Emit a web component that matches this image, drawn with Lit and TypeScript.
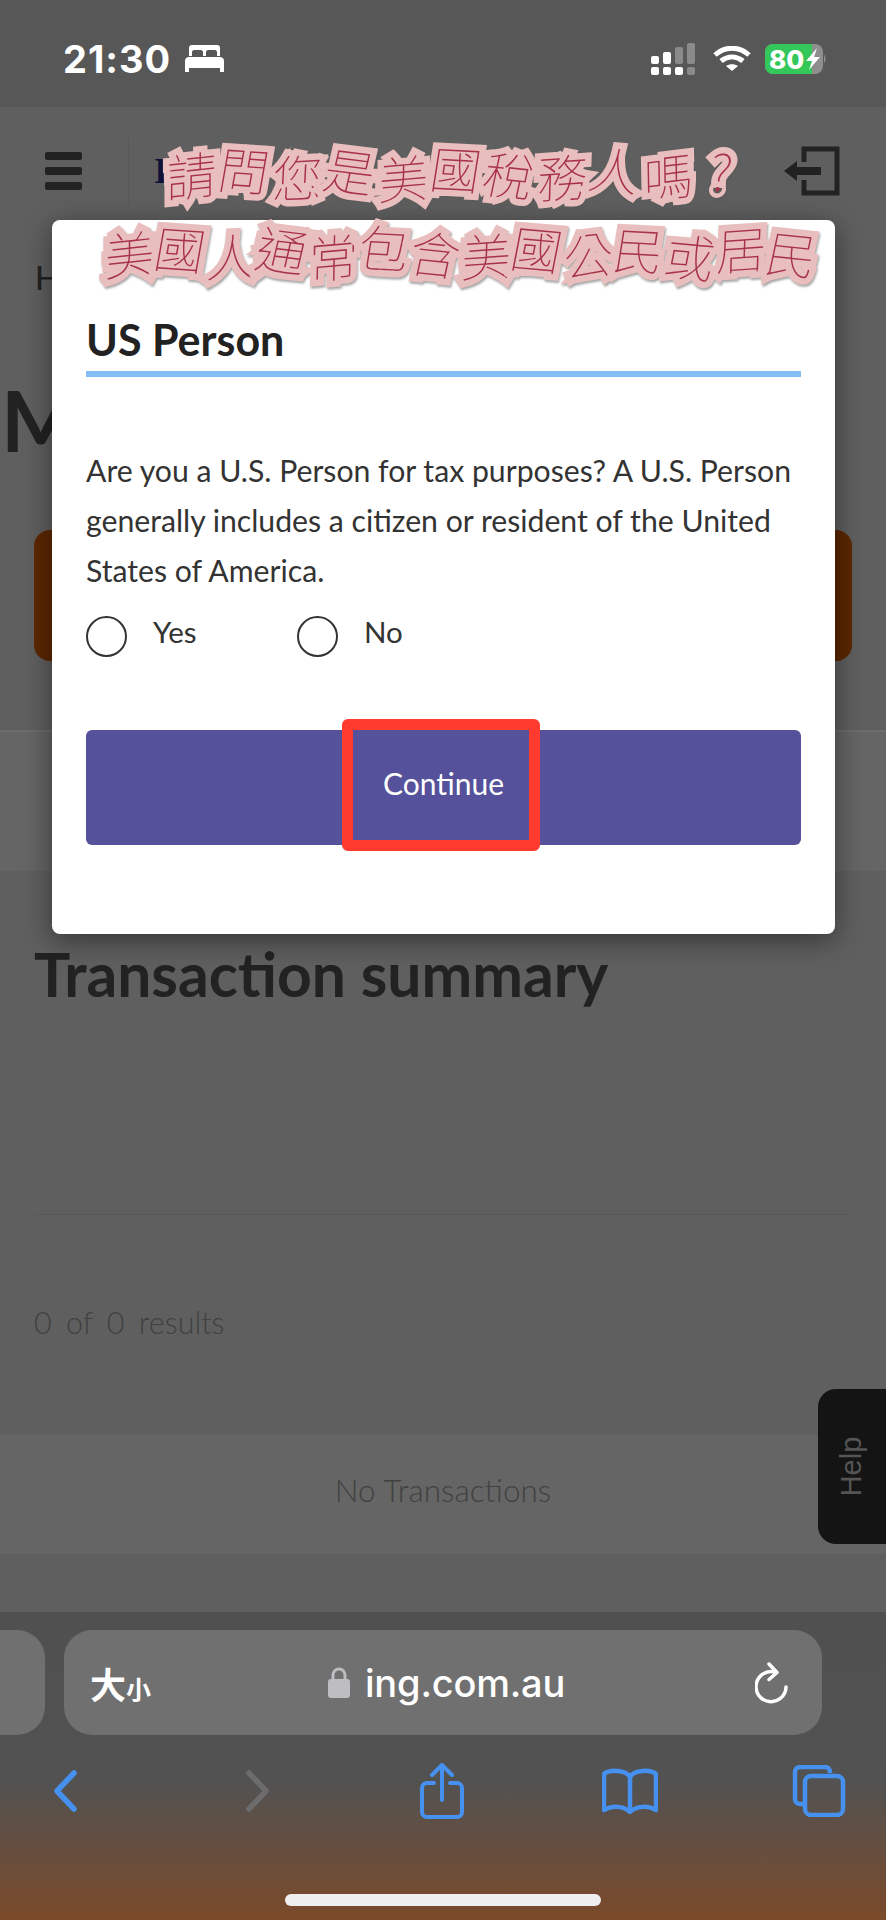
import { LitElement, html, css, svg } from "lit";
import { customElement } from "lit/decorators.js";

const line1 = "請問您是美國稅務人嗎?";
const line2 = "美國人通常包含美國公民或居民";
const tilt = [-6, 4, -3, 7, -5, 3, 6, -4, 5, -7, 3, 5, -4, 6];
const drop = [2, -3, 4, -2, 5, -4, 2, 4, -3, 3, -2, 5, -3, 2];

@customElement("app-root")
export class AppRoot extends LitElement {
  static styles = css`
    :host { display: block; width: 886px; height: 1920px; }
    * { box-sizing: border-box; }
    .screen { position: relative; width: 886px; height: 1920px; overflow: hidden; background: #5f5f5f; font-family: "Lato", "Noto Sans", sans-serif; display: flex; flex-direction: column; }
    .status { height: 107px; background: #575757; display: flex; align-items: center; padding: 10px 60px 0 63px; flex: none; }
    .time { font: 700 38px "Inter", "Liberation Sans", sans-serif; color: #fff; letter-spacing: 1px; width: 121px; }
    .status-right { margin-left: auto; display: flex; align-items: center; gap: 14px; }
    .nav { height: 113px; display: flex; align-items: center; padding: 14px 46px 0 44px; flex: none; }
    .divider-v { width: 1px; height: 68px; background: #585858; margin-left: 46px; }
    .logo-i { font: 700 36px "Liberation Serif", serif; color: #0d1238; margin-left: 25px; }
    .spacer { flex: 1; }
    .crumb { height: 100px; padding: 36px 0 0 35px; font-size: 32px; line-height: 44px; font-weight: 500; color: #222; flex: none; }
    .title { height: 210px; padding: 52px 0 0 1px; font-size: 84px; line-height: 96px; font-weight: 700; color: #222; flex: none; }
    .banner { height: 131px; margin: 0 34px; background: #5c2700; border-radius: 16px; flex: none; }
    .band-a { margin-top: 69px; height: 141px; background: #656565; border-top: 2px solid #6d6d6d; flex: none; }
    .sum { margin: 65px 0 0 34px; font-size: 60.6px; line-height: 76px; font-weight: 700; color: #222; flex: none; }
    .rule { margin: 202px 34px 0; height: 1px; background: #585858; flex: none; }
    .results { margin: 87px 0 0 34px; font-size: 30.5px; line-height: 40px; color: #414141; word-spacing: 6px; font-weight: 300; flex: none; }
    .band-b { margin-top: 93px; height: 119px; padding-bottom: 10px; background: #656565; display: flex; align-items: center; justify-content: center; font-size: 31.5px; color: #414141; font-weight: 300; flex: none; }
    .toolbar { margin-top: auto; height: 308px; flex: none; background: linear-gradient(#505050 0%, #525252 55%, #7b4a2a 100%); display: flex; flex-direction: column; padding-top: 18px; }
    .pills { display: flex; gap: 19px; margin-left: -200px; height: 105px; flex: none; }
    .pill { border-radius: 28px; background: #707070; height: 105px; }
    .pill.side { width: 245px; }
    .pill.main { width: 758px; display: flex; align-items: center; padding: 0 33px 0 26px; position: relative; color: #fff; }
    .aa { font: 700 36px "Noto Sans CJK TC", sans-serif; color: #fff; }
    .aa small { font-size: 25px; }
    .url { position: absolute; left: 264px; top: 0; height: 105px; display: flex; align-items: center; gap: 15px; font: 500 38px "Inter", "Liberation Sans", sans-serif; color: #fff; letter-spacing: -0.2px; }
    .reload { margin-left: auto; }
    .tools { display: flex; height: 70px; margin-top: 21px; flex: none; position: relative; padding-left: 53px; align-items: center; }
    .tools svg { flex: none; }
    .home { width: 316px; height: 12px; border-radius: 6px; background: #efefef; margin: 68px auto 0; flex: none; }
    .help { position: absolute; right: 0; top: 1389px; width: 68px; height: 155px; background: #141414; border-radius: 18px 0 0 18px; display: flex; align-items: center; justify-content: center; }
    .help span { transform: rotate(-90deg); font: 400 29px "Liberation Sans", sans-serif; color: #555; }
    .modal { position: absolute; left: 52px; top: 220px; width: 783px; height: 714px; background: #fff; border-radius: 8px; box-shadow: 0 6px 28px rgba(0,0,0,.45); padding: 96px 34px 0; color: #333; }
    .modal h2 { margin: 0; font-size: 43px; line-height: 48px; font-weight: 700; color: #222; border-bottom: 6px solid #85bdf5; height: 61px; }
    .modal p { margin: 68px 0 0; font-size: 30.2px; line-height: 50px; color: #333; }
    .radios { display: flex; margin-top: 20px; height: 42px; align-items: center; }
    .radio { width: 41px; height: 41px; border-radius: 50%; border: 2px solid #333; flex: none; }
    .rl { font-size: 29.5px; line-height: 36px; margin: -8px 0 0 26px; color: #333; }
    .rl.yes { width: 144px; }
    .btn { margin-top: 73px; height: 115px; background: #55519a; border-radius: 6px; color: #fff; font-size: 30px; display: flex; align-items: center; justify-content: center; padding-bottom: 10px; font-weight: 400; }
    .redbox { position: absolute; left: 290px; top: 499px; width: 198px; height: 132px; border: 11px solid #ff3b30; border-radius: 6px; }
    .note { position: absolute; left: 0; white-space: nowrap; font: 100 50px "Noto Sans CJK TC", sans-serif; color: #a83248; display: flex; filter: drop-shadow(1px 2px 1px rgba(90,90,90,.55)); }
    .note span { display: block; -webkit-text-stroke: 13px #e8bfbe; paint-order: stroke fill; text-align: center; line-height: 56px; }
    .note.a { left: 165px; top: 143px; }
    .note.b { left: 104px; top: 222px; }
    .note.a span { width: 53px; }
    .note.b span { width: 51px; }
  `;

  private note(text: string, cls: string) {
    return html`<div class="note ${cls}">${[...text].map((c, i) => html`<span style="transform: translateY(${drop[i % drop.length]}px) rotate(${tilt[i % tilt.length]}deg) skewX(-6deg)">${c}</span>`)}</div>`;
  }

  render() {
    return html`
      <div class="screen">
        <div class="status">
          <span class="time">21:30</span>
          <svg width="41" height="30" viewBox="0 0 41 30" fill="#fff"><path d="M1 28V17c0-3 2-4 4-4h31c2 0 4 1 4 4v11h-4v-4H5v4z"/><path d="M5 12V4c0-2 1-3 3-3h25c2 0 3 1 3 3v8h-3V8c0-1-1-2-2-2h-7c-1 0-2 1-2 2v4h-3V8c0-1-1-2-2-2h-7C9 6 8 7 8 8v4z"/></svg>
          <div class="status-right">
            <svg width="48" height="32" viewBox="0 0 48 32">
              <g fill="#fff"><rect x="0" y="13" width="8" height="8" rx="2"/><rect x="12" y="9" width="8" height="12" rx="2"/><rect x="0" y="24" width="8" height="8" rx="2"/><rect x="12" y="24" width="8" height="8" rx="2"/><rect x="24" y="24" width="8" height="8" rx="2"/></g>
              <g fill="#8a8a8a"><rect x="24" y="4" width="8" height="17" rx="2"/><rect x="36" y="0" width="8" height="21" rx="2"/><rect x="36" y="24" width="8" height="8" rx="2"/></g>
            </svg>
            <svg width="38" height="26" viewBox="0 0 38 26" fill="none" stroke="#fff" stroke-width="5"><path d="M2 9c10-9 24-9 34 0"/><path d="M8 15c7-5.500 15-5.500 22 0"/><path d="M19 25l-6-5c3.500-2.500 8.500-2.500 12 0z" fill="#fff" stroke="none"/></svg>
            <svg width="61" height="30" viewBox="0 0 61 30">
              <rect x="0" y="0" width="58" height="30" rx="8" fill="#8e8e8e"/>
              <path d="M8 0h39v30H8a8 8 0 0 1-8-8V8a8 8 0 0 1 8-8z" fill="#34c759"/>
              <path d="M59 11c2 1 2 7 0 8z" fill="#8e8e8e"/>
              <text x="4" y="25" font-family="Inter, Liberation Sans, sans-serif" font-weight="800" font-size="26" fill="#fff">80</text>
              <path d="M52 4l-11 13h6l-3 9 11-13h-6z" fill="#fff"/>
            </svg>
          </div>
        </div>
        <div class="nav">
          <svg width="38" height="38" viewBox="0 0 38 38" fill="#222"><rect y="0" x="1" width="37" height="8" rx="2"/><rect y="15" x="1" width="37" height="8" rx="2"/><rect y="30" x="1" width="37" height="8" rx="2"/></svg>
          <div class="divider-v"></div>
          <span class="logo-i">I</span>
          <div class="spacer"></div>
          <svg width="56" height="50" viewBox="0 0 56 50"><path d="M20 16V3h33v44H20V34" fill="none" stroke="#222" stroke-width="5"/><path d="M0 25l13-10v6h24v8H13v6z" fill="#222"/></svg>
        </div>
        <div class="crumb">H</div>
        <div class="title">M</div>
        <div class="banner"></div>
        <div class="band-a"></div>
        <div class="sum">Transaction summary</div>
        <div class="rule"></div>
        <div class="results">0 of 0 results</div>
        <div class="band-b">No Transactions</div>
        <div class="toolbar">
          <div class="pills">
            <div class="pill side"></div>
            <div class="pill main">
              <span class="aa">大<small>小</small></span>
              <span class="url">
                <svg width="22" height="31" viewBox="0 0 22 31"><path d="M5 13V8a6 6 0 0 1 12 0v5" fill="none" stroke="#bdbdc2" stroke-width="3"/><rect x="0" y="12" width="22" height="19" rx="3" fill="#bdbdc2"/></svg>
                ing.com.au
              </span>
              <svg class="reload" width="34" height="42" viewBox="0 0 34 42" fill="none" stroke="#fff" stroke-width="3.500" stroke-linecap="round" stroke-linejoin="round"><path d="M21 10.500A15 15 0 1 0 31 25"/><path d="M14 2l8 8.500-8 7"/></svg>
            </div>
          </div>
          <div class="tools">
            ${this.icon(24, 42, svg`<path d="M21 3L4 21l17 18" fill="none" stroke="#4690ef" stroke-width="5.500" stroke-linecap="round" stroke-linejoin="round"/>`, "margin-right:169px")}
            ${this.icon(24, 42, svg`<path d="M3 3l17 18L3 39" fill="none" stroke="#6c6c6c" stroke-width="5.500" stroke-linecap="round" stroke-linejoin="round"/>`, "margin-right:150px")}
            ${this.icon(44, 56, svg`<g fill="none" stroke="#4690ef" stroke-width="4" stroke-linecap="round" stroke-linejoin="round"><path d="M14 20H7a5 5 0 0 0-5 5v24a5 5 0 0 0 5 5h30a5 5 0 0 0 5-5V25a5 5 0 0 0-5-5h-7"/><path d="M22 37V3M12 12l10-10 10 10"/></g>`, "margin-right:138px")}
            ${this.icon(56, 46, svg`<g fill="none" stroke="#4690ef" stroke-width="4.500" stroke-linejoin="round"><path d="M28 9C24 2 8 1 2 6v36c8-5 20-4 26 2 6-6 18-7 26-2V6c-6-5-22-4-26 3z"/><path d="M28 9v33"/></g>`, "margin-right:134px")}
            ${this.icon(54, 52, svg`<g fill="none" stroke="#4690ef" stroke-width="4.500"><path d="M38 8V7a5 5 0 0 0-5-5H8a5 5 0 0 0-5 5v27a5 5 0 0 0 5 5h3"/><rect x="13" y="11" width="38" height="39" rx="6"/></g>`)}
          </div>
          <div class="home"></div>
        </div>
        <div class="help"><span>Help</span></div>
        <div class="modal">
          <h2>US Person</h2>
          <p>Are you a U.S. Person for tax purposes? A U.S. Person generally includes a citizen or resident of the United States of America.</p>
          <div class="radios">
            <div class="radio"></div><span class="rl yes">Yes</span>
            <div class="radio"></div><span class="rl">No</span>
          </div>
          <div class="btn">Continue</div>
          <div class="redbox"></div>
        </div>
        ${this.note(line1, "a")}
        ${this.note(line2, "b")}
      </div>
    `;
  }

  private icon(w: number, h: number, body: unknown, style = "") {
    return html`<svg width=${w} height=${h} viewBox="0 0 ${w} ${h}" style=${style}>${body}</svg>`;
  }
}
